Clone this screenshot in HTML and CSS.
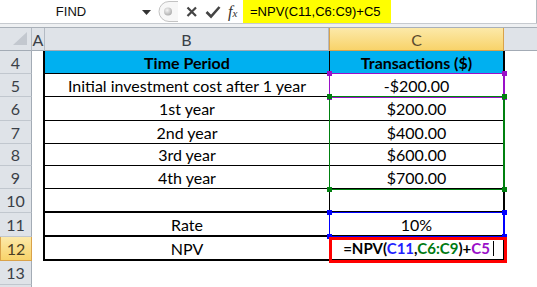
FILE: index.html
```html
<!DOCTYPE html>
<html>
<head>
<meta charset="utf-8">
<link rel="stylesheet" href="styles.css">
</head>
<body>
<div class="app">
  <div class="fbar">
    <div class="namebox">
      <span class="name">FIND</span>
      <svg class="dd" width="9" height="5" viewBox="0 0 9 5"><path d="M0 0H9L4.5 5Z" fill="#333"/></svg>
    </div>
    <div class="ctrls">
      <svg class="knob" width="22" height="23" viewBox="0 0 22 23">
        <defs><radialGradient id="kg" cx="0.4" cy="0.35" r="0.7"><stop offset="0" stop-color="#f4f4f4"/><stop offset="1" stop-color="#a9a9a9"/></radialGradient></defs>
        <path d="M21 1.5H12A10 10 0 0 0 12 21.5H21" fill="#f7f7f7" stroke="#c3c3c3"/>
        <circle cx="11" cy="11.5" r="4" fill="url(#kg)"/>
      </svg>
      <svg class="ico" width="14" height="14" viewBox="0 0 14 14"><path d="M2.5 2.5L11 11M11 2.5L2.5 11" stroke="#444" stroke-width="2.2"/></svg>
      <svg class="ico" width="16" height="14" viewBox="0 0 16 14"><path d="M1.5 7L6 11.5L14.5 2" fill="none" stroke="#444" stroke-width="2.6"/></svg>
      <span class="fx">f<span class="fxs">x</span></span>
    </div>
    <div class="formula"><span class="hl">=NPV(C11,C6:C9)+C5</span></div>
  </div>
  <div class="gap"></div>
  <div class="colhead">
    <div class="corner"><svg width="16" height="15" viewBox="0 0 16 15"><path d="M15 1V14H1Z" fill="#c3c8cf"/></svg></div>
    <div class="ch">A</div>
    <div class="ch">B</div>
    <div class="ch sel">C</div>
    <div class="ch rest"></div>
  </div>
  <div class="sheet">
    <div class="rn">4</div><div class="a"></div><div class="b hd">Time Period</div><div class="c hd">Transactions ($)</div><div class="r"></div>
    <div class="rn">5</div><div class="a"></div><div class="b">Initial investment cost after 1 year</div><div class="c">-$200.00</div><div class="r"></div>
    <div class="rn">6</div><div class="a"></div><div class="b">1st year</div><div class="c">$200.00</div><div class="r"></div>
    <div class="rn">7</div><div class="a"></div><div class="b">2nd year</div><div class="c">$400.00</div><div class="r"></div>
    <div class="rn">8</div><div class="a"></div><div class="b">3rd year</div><div class="c">$600.00</div><div class="r"></div>
    <div class="rn">9</div><div class="a"></div><div class="b">4th year</div><div class="c">$700.00</div><div class="r"></div>
    <div class="rn">10</div><div class="a"></div><div class="b thick"></div><div class="c thick"></div><div class="r"></div>
    <div class="rn">11</div><div class="a"></div><div class="b thick">Rate</div><div class="c thick">10%</div><div class="r"></div>
    <div class="rn sel">12</div><div class="a"></div><div class="b thick">NPV</div><div class="c thick edit"><span class="ft">=NPV(<span class="cb">C11</span>,<span class="cg">C6:C9</span>)+<span class="cp">C5</span></span><span class="caret"></span></div><div class="r"></div>
    <div class="rn">13</div><div class="a"></div><div class="e"></div><div class="e"></div><div class="r"></div>
    <div class="rn"></div><div class="a"></div><div class="e"></div><div class="e"></div><div class="r"></div>

    <div class="rng purple"><i class="h tl"></i><i class="h tr"></i><i class="h bl"></i><i class="h br"></i></div>
    <div class="rng green"><i class="h tl"></i><i class="h tr"></i><i class="h bl"></i><i class="h br"></i></div>
    <div class="rng blue"><i class="h tl"></i><i class="h tr"></i><i class="h bl"></i><i class="h br"></i></div>
    <div class="active"></div>
  </div>
</div>
</body>
</html>
```

FILE: styles.css
```css
html, body {
  margin: 0;
  padding: 0;
  background: #fff;
}
.app {
  width: 537px;
  height: 287px;
  overflow: hidden;
  font-family: Lato, "Liberation Sans", sans-serif;
  color: #000;
}
.fbar {
  display: flex;
  height: 23px;
  border-bottom: 1px solid #c6cacf;
  background: #fff;
}
.namebox {
  width: 156px;
  display: flex;
  align-items: center;
}
.name {
  flex: 1;
  text-align: center;
  font-family: "Liberation Sans", sans-serif;
  font-size: 13px;
  color: #111;
}
.dd {
  margin: 1px 5px 0 0;
}
.ctrls {
  width: 87px;
  display: flex;
  align-items: center;
}
.knob {
  margin-left: 1px;
}
.ico {
  margin-left: 6px;
}
.fx {
  margin-left: 7px;
  font-family: "Liberation Serif", serif;
  font-style: italic;
  font-size: 16px;
  color: #333;
}
.fxs {
  font-size: 11px;
}
.formula {
  flex: 1;
  border-right: 1px solid #b3b9c0;
}
.hl {
  display: inline-block;
  width: 141px;
  height: 23px;
  padding-left: 7px;
  line-height: 23px;
  background: #ffff00;
  font-family: "Liberation Sans", sans-serif;
  font-size: 13px;
  color: #000;
}
.gap {
  height: 3px;
  background: #eef0f2;
  border-bottom: 1px solid #a9b0b8;
}
.colhead {
  display: grid;
  grid-template-columns: 32px 13px 284px 175px 1fr;
  height: 23px;
  background: #dfe3e8;
}
.colhead > div {
  border-right: 1px solid #b3bac3;
  border-bottom: 1px solid #a3abb5;
  display: flex;
  align-items: center;
  justify-content: center;
  font-size: 16px;
  color: #3a3f47;
}
.corner {
  align-items: flex-end !important;
  justify-content: flex-end !important;
}
.corner svg {
  margin: 0 3px 4px 0;
}
.colhead .sel {
  background: linear-gradient(#fce9a9, #f8d36a);
  border-color: #d9a24a;
  border-left: 1px solid #d9a24a;
  color: #5b4a2e;
}
.colhead .rest {
  border-right: none;
}
.sheet {
  position: relative;
  display: grid;
  grid-template-columns: 32px 11px 287px 175px 1fr;
  grid-template-rows: 23px 23px 24px 23px 22px 23px 24px 24px 24px 24px 24px;
}
.sheet > div {
  box-sizing: border-box;
}
.rn {
  background: #dfe3e8;
  border-right: 1px solid #a3abb5;
  border-bottom: 1px solid #c1c7ce;
  display: flex;
  align-items: center;
  justify-content: center;
  font-size: 16px;
  color: #3a3f47;
}
.rn.sel {
  background: linear-gradient(#fce9a9, #f8d36a);
  border: 1px solid #d9a24a;
  border-top: none;
  color: #4b3d24;
}
.b, .c {
  display: flex;
  align-items: center;
  justify-content: center;
  font-size: 16px;
  border-bottom: 1px solid #000;
  white-space: nowrap;
}
.b {
  border-left: 2px solid #000;
  border-right: 1px solid #000;
}
.c {
  border-right: 2px solid #000;
}
.hd {
  background: #00b0f0;
  font-weight: bold;
}
.thick {
  border-bottom-width: 2px;
}
.edit {
  font-weight: bold;
  font-size: 15px;
  padding-left: 4px;
}
.cb { color: #1f1fff; }
.cg { color: #007a12; }
.cp { color: #9a10c8; }
.caret {
  display: inline-block;
  width: 1px;
  height: 15px;
  margin-left: 3px;
  background: #000;
}
.rng {
  position: absolute;
  grid-column: 4 / 5;
  border: 1px solid currentColor;
  border-right-width: 2px;
  top: -1px;
  bottom: -1px;
  left: -1px;
  right: 0;
}
.purple {
  grid-row: 2 / 3;
  color: #9a10c8;
}
.green {
  grid-row: 3 / 7;
  color: #00800f;
}
.blue {
  grid-row: 8 / 9;
  color: #0000ff;
  bottom: 0;
}
.h {
  position: absolute;
  width: 5px;
  height: 5px;
  background: currentColor;
}
.tl { top: -3px; left: -3px; }
.tr { top: -3px; right: -4px; }
.bl { bottom: -3px; left: -3px; }
.br { bottom: -3px; right: -4px; }
.active {
  position: absolute;
  grid-column: 4 / 5;
  grid-row: 9 / 10;
  top: 0;
  bottom: -2px;
  left: -1px;
  right: -2px;
  border: 3px solid #ff0000;
}
```
